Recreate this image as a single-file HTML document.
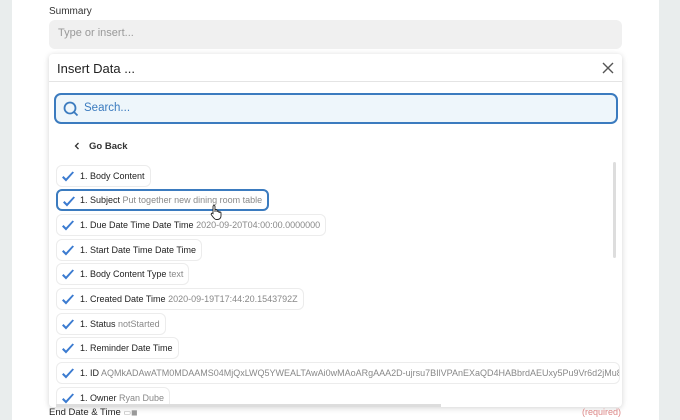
<!DOCTYPE html>
<html><head><meta charset="utf-8"><style>
*{box-sizing:border-box;margin:0;padding:0}
body{width:680px;height:420px;overflow:hidden;background:#e9eded;font-family:"Liberation Sans",sans-serif;position:relative}
.page{position:absolute;left:12px;top:0;width:647px;height:420px;background:#fff}
.lbl{position:absolute;left:49px;top:6px;font-size:10px;color:#333}
.inp{position:absolute;left:49px;top:20px;width:573px;height:29px;background:#f0f0f0;border-radius:6px;font-size:11px;color:#999;padding:7px 9px}
.pop{position:absolute;left:49px;top:54px;width:573px;height:353px;background:#fff;border-radius:4px;box-shadow:0 1px 6px rgba(0,0,0,.18);overflow:hidden}
.hd{height:28px;border-bottom:1px solid #e4e4e4;font-size:13px;color:#222;padding:7px 8px}
.x{position:absolute;right:8px;top:8px}
.srch{position:absolute;left:5px;top:39px;width:564px;height:31px;background:#eef6fb;border:2px solid #3b7bbf;border-radius:7px}
.srch span{position:absolute;left:28px;top:7px;font-size:11.5px;color:#3b7bbf}
.gb{position:absolute;left:40px;top:87px;font-size:9.5px;font-weight:bold;color:#333}
.it{position:absolute;left:7px;height:22px;border:1px solid #ececec;border-radius:6px;font-size:9px;color:#333;padding:5px 5px 0 23px;white-space:nowrap}
.it svg{position:absolute;left:4px;top:5px}
.it b{font-weight:normal;color:#222}
.it i{font-style:normal;color:#888}
.sel{border:2px solid #3b7bbf;padding-top:4px;padding-left:22px}
.sb{position:absolute;left:564px;top:108px;width:3px;height:96px;background:#ddd;border-radius:2px}
.hs{position:absolute;left:7px;top:350px;width:385px;height:3px;background:#ddd}
.ed{position:absolute;left:49px;top:407px;font-size:9.5px;color:#222}
.req{position:absolute;left:582px;top:407px;font-size:9px;color:#d88}
</style></head><body>
<div class="page"></div>
<div class="lbl">Summary</div>
<div class="inp">Type or insert...</div>
<div class="pop">
<div class="hd">Insert Data ...</div>
<svg class="x" width="12" height="12" viewBox="0 0 12 12"><path d="M1 1L11 11M11 1L1 11" stroke="#555" stroke-width="1.4"/></svg>
<div class="srch"><svg style="position:absolute;left:7px;top:6px" width="16" height="16" viewBox="0 0 16 16"><circle cx="7" cy="7" r="5.5" fill="none" stroke="#3b7bbf" stroke-width="1.8"/><path d="M11 11L14.5 14.5" stroke="#3b7bbf" stroke-width="1.8"/></svg><span>Search...</span></div>
<svg style="position:absolute;left:25px;top:88px" width="6" height="8" viewBox="0 0 6 8"><path d="M4.5 1L1.5 4L4.5 7" fill="none" stroke="#333" stroke-width="1.3"/></svg>
<div class="gb">Go Back</div>
<div class="sb"></div>
<div class="it" style="top:111px">CHK<b>1. Body Content</b></div>
<div class="it sel" style="top:135px">CHK<b>1. Subject</b> <i>Put together new dining room table</i></div>
<div class="it" style="top:160px">CHK<b>1. Due Date Time Date Time</b> <i>2020-09-20T04:00:00.0000000</i></div>
<div class="it" style="top:185px">CHK<b>1. Start Date Time Date Time</b></div>
<div class="it" style="top:209px">CHK<b>1. Body Content Type</b> <i>text</i></div>
<div class="it" style="top:234px">CHK<b>1. Created Date Time</b> <i>2020-09-19T17:44:20.1543792Z</i></div>
<div class="it" style="top:259px">CHK<b>1. Status</b> <i>notStarted</i></div>
<div class="it" style="top:283px">CHK<b>1. Reminder Date Time</b></div>
<div class="it" style="top:308px;width:564px;overflow:hidden">CHK<b>1. ID</b> <i>AQMkADAwATM0MDAAMS04MjQxLWQ5YWEALTAwAi0wMAoARgAAA2D-ujrsu7BIlVPAnEXaQD4HABbrdAEUxy5Pu9Vr6d2jMu8AAAIBEgAAAA==</i></div>
<div class="it" style="top:333px">CHK<b>1. Owner</b> <i>Ryan Dube</i></div>
<div class="hs"></div>
<svg style="position:absolute;left:161px;top:150px" width="12" height="16" viewBox="0 0 12 16"><path d="M3 9V2.5a1 1 0 0 1 2 0V8V6.5a1 1 0 0 1 2 0V8a1 1 0 0 1 2 0V9a1 1 0 0 1 2 0V12c0 2-1.5 3.5-3.5 3.5H6C4.5 15.5 3 13 1.5 11a1 1 0 0 1 1.5-1.5z" fill="#fff" stroke="#222" stroke-width=".9"/></svg>
</div>
<div class="ed">End Date &amp; Time <span style="color:#999;font-size:8px">▭◼</span></div>
<div class="req">(required)</div>
<script>
document.querySelectorAll('.it').forEach(function(e){e.innerHTML=e.innerHTML.replace('CHK','<svg width="14" height="12" viewBox="0 0 14 12"><path d="M1 6.5L5 10.5L13 1.5L11.5 0.5L5 7.5L2.5 5Z" fill="#3b7bd0"/></svg>');});
</script>
</body></html>
